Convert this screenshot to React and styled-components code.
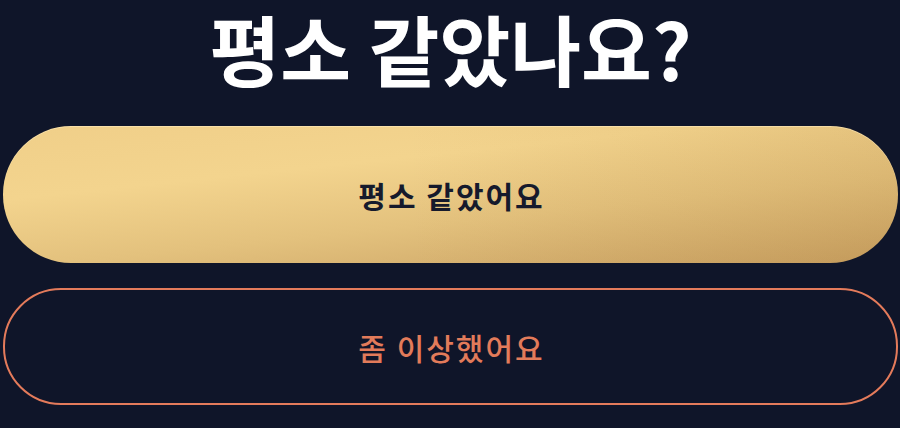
import React from 'react';
import styled, { createGlobalStyle } from 'styled-components';

const GlobalStyle = createGlobalStyle`
  html, body {
    margin: 0;
    padding: 0;
    background-color: #0f1529;
  }
  body {
    font-family: 'Noto Sans CJK KR', 'Noto Sans', sans-serif;
  }
`;

const Screen = styled.div`
  width: 900px;
  height: 428px;
  box-sizing: border-box;
  padding: 2px 2px 0 3px;
  display: flex;
  flex-direction: column;
  align-items: stretch;
  overflow: hidden;
  background-color: #0f1529;
`;

const Title = styled.h1`
  margin: 0;
  font-size: 77px;
  line-height: 1.2;
  font-weight: 700;
  letter-spacing: 0;
  color: #ffffff;
  text-align: center;
`;

const Choices = styled.div`
  margin-top: 32px;
  display: flex;
  flex-direction: column;
  gap: 25px;
`;

// gold fill: light band across the top, deepening toward the lower right
const goldFill = `
  linear-gradient(90deg, rgba(160, 110, 40, 0) 45%, rgba(160, 110, 40, 0.12) 100%),
  linear-gradient(174deg, #f0cf89 0%, #f3d48e 32%, #e3c17d 62%, #c8a062 100%)
`;

const Choice = styled.button`
  display: flex;
  align-items: center;
  justify-content: center;
  box-sizing: border-box;
  width: 100%;
  height: ${(p) => (p.$primary ? '137px' : '117px')};
  border-radius: ${(p) => (p.$primary ? '68px' : '58px')};
  border: ${(p) => (p.$primary ? 'none' : '2px solid #e47b5b')};
  background: ${(p) => (p.$primary ? goldFill : 'transparent')};
  box-shadow: ${(p) =>
    p.$primary ? 'inset 0 1px 0 rgba(255, 240, 200, 0.5)' : 'none'};
  color: ${(p) => (p.$primary ? '#161a2c' : '#e27b5a')};
  font-family: 'Noto Sans CJK KR', 'Noto Sans', sans-serif;
  font-size: 30px;
  font-weight: ${(p) => (p.$primary ? 700 : 500)};
  letter-spacing: 2px;
  cursor: pointer;
  padding: 0 0 0 2px;
`;

export default function App() {
  return (
    <>
      <GlobalStyle />
      <Screen>
        <Title>평소 같았나요?</Title>
        <Choices>
          <Choice $primary>평소 같았어요</Choice>
          <Choice>좀 이상했어요</Choice>
        </Choices>
      </Screen>
    </>
  );
}
